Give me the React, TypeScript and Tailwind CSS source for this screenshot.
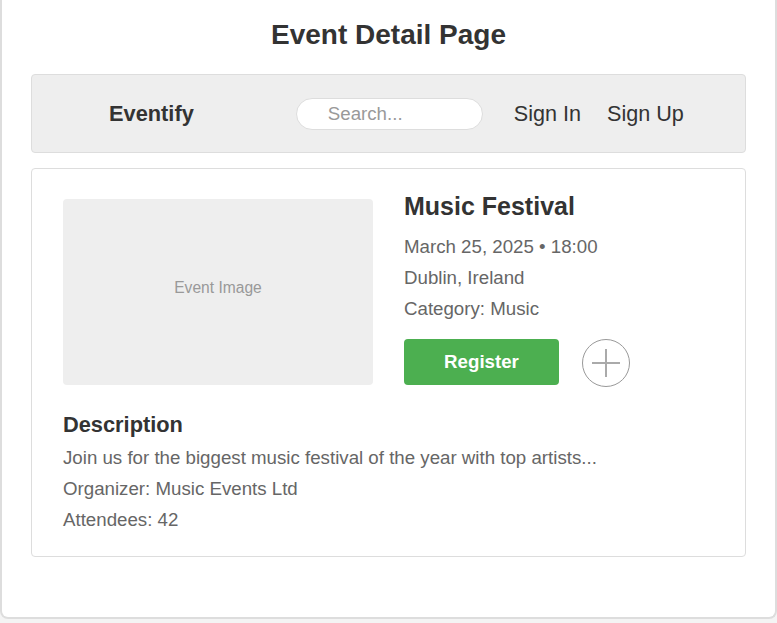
export default function App() {
  const font = { fontFamily: "'Liberation Sans', Arial, sans-serif" };
  return (
    <div className="w-[777px] h-[623px] bg-[#f4f4f4]" style={font}>
      <div className="w-[777px] h-[619px] bg-white border-2 border-t-0 border-[#dddddd] rounded-b-[8px] px-[29px]">
        <h1 className="text-[28px] leading-[30px] font-bold text-[#333] text-center pt-[20px] mb-[24px]">
          Event Detail Page
        </h1>

        <nav className="h-[79px] flex items-center bg-[#eeeeee] border border-[#dddddd] rounded-[4px] pl-[77px]">
          <span className="mt-[2px] text-[21.8px] font-bold text-[#333]">Eventify</span>
          <div className="ml-[102px] w-[187px] h-[32px] mt-[1px] rounded-full bg-white border border-[#dddddd] flex items-center pl-[31px]">
            <span className="mt-[1px] text-[18.7px] text-[#999]">Search...</span>
          </div>
          <a className="mt-[2px] ml-[31px] text-[21.6px] text-[#333]">Sign In</a>
          <a className="mt-[2px] ml-[26px] text-[21.6px] text-[#333]">Sign Up</a>
        </nav>

        <div className="mt-[15px] h-[389px] border border-[#dddddd] rounded-[4px] px-[31px] pt-[23px]">
          <div className="flex items-start gap-[31px]">
            <div className="mt-[7px] w-[310px] h-[186px] bg-[#eeeeee] rounded-[4px] flex items-center justify-center">
              <span className="mb-[9px] text-[15.6px] text-[#999]">Event Image</span>
            </div>
            <div className="flex flex-col">
              <h2 className="text-[25px] leading-[28px] font-bold text-[#333] mb-[16px]">Music Festival</h2>
              <p className="text-[18.7px] leading-[21px] text-[#666] mb-[10px]">March 25, 2025 • 18:00</p>
              <p className="text-[18.7px] leading-[21px] text-[#666] mb-[10px]">Dublin, Ireland</p>
              <p className="text-[18.7px] leading-[21px] text-[#666] mb-[20px]">Category: Music</p>
              <div className="flex items-start h-[46px]">
                <button className="w-[155px] h-[46px] bg-[#4caf50] rounded-[4px] text-white text-[18.7px] font-bold">
                  Register
                </button>
                <div className="ml-[23px] shrink-0 w-[48px] h-[48px] rounded-full border-[1.5px] border-[#999] flex items-center justify-center">
                  <svg width="30" height="30" viewBox="0 0 30 30">
                    <line x1="1" y1="15" x2="29" y2="15" stroke="#aaa" strokeWidth="2" />
                    <line x1="15" y1="1" x2="15" y2="29" stroke="#aaa" strokeWidth="2" />
                  </svg>
                </div>
              </div>
            </div>
          </div>

          <h3 className="mt-[27px] text-[21.8px] leading-[25px] font-bold text-[#333] mb-[10px]">Description</h3>
          <p className="text-[18.7px] leading-[21px] text-[#666] mb-[10px]">
            Join us for the biggest music festival of the year with top artists...
          </p>
          <p className="text-[18.7px] leading-[21px] text-[#666] mb-[10px]">Organizer: Music Events Ltd</p>
          <p className="text-[18.7px] leading-[21px] text-[#666]">Attendees: 42</p>
        </div>
      </div>
    </div>
  );
}
